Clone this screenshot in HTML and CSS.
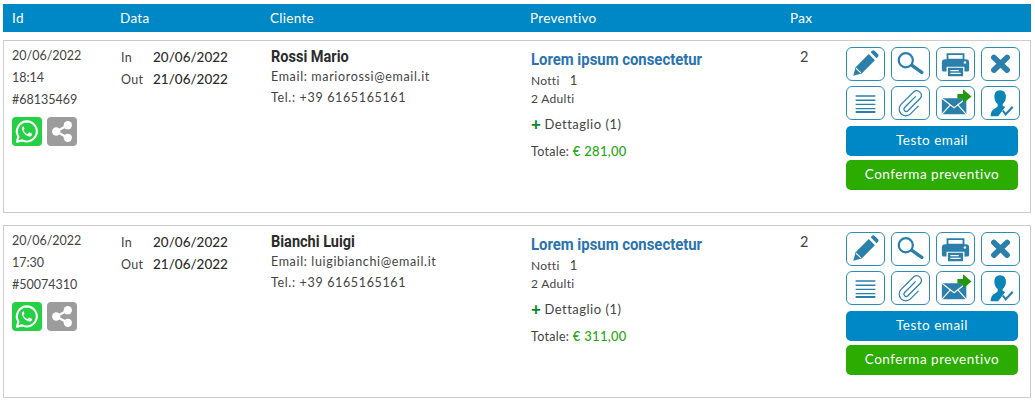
FILE: index.html
```html
<!DOCTYPE html>
<html lang="it">
<head>
    <meta charset="UTF-8">
    <title>Preventivi</title>
    <link rel="stylesheet" href="styles.css">
</head>
<body>
    <svg class="sprites" width="0" height="0">
        <symbol id="i-whatsapp" viewBox="0 0 30 30">
            <path d="M15 4.5a10.4 10.4 0 0 0-8.9 15.8L4.6 25.6l5.500-1.400A10.400 10.400 0 1 0 15 4.500z" fill="none" stroke="#fff" stroke-width="2.2" stroke-linejoin="round"/>
            <path d="M11.300 9.700c-.5 0-1.300.5-1.500 1.800-.3 1.700.7 3.700 2.300 5.500 1.700 1.800 3.700 3 5.500 3.100 1.400.1 2.300-.8 2.500-1.600.2-.7.1-1.100-.1-1.200l-2.500-1.200c-.3-.1-.5 0-.7.200l-.9 1.100c-.2.200-.4.200-.7.100-1.700-.7-3-2-3.800-3.600-.1-.2 0-.4.200-.6l.7-.9c.1-.2.100-.4 0-.6l-1-2.400c-.1-.2-.3-.2-.5-.2z" fill="#fff"/>
        </symbol>
        <symbol id="i-share" viewBox="0 0 30 30">
            <path d="M21 8.500 9 15l12 6.500" fill="none" stroke="#fff" stroke-width="2.4"/>
            <circle cx="21" cy="8.500" r="4.3" fill="#fff"/>
            <circle cx="9" cy="15" r="4.3" fill="#fff"/>
            <circle cx="21" cy="21.500" r="4.3" fill="#fff"/>
        </symbol>
        <symbol id="i-pencil" viewBox="0 0 39 34">
            <path d="M6.500 29.500l2.500-9L23 6.500l6.500 6.500-14 14z" fill="#2b7fab"/>
            <path d="M25 4.500l1.500-1.500c.8-.8 1.800-.8 2.600 0l3.700 3.700c.8.800.8 1.800 0 2.600L31.300 11z" fill="#2b7fab"/>
            <path d="M9.500 21.500l5 5" stroke="#fff" stroke-width="1.2"/>
        </symbol>
        <symbol id="i-search" viewBox="0 0 39 34">
            <circle cx="14.500" cy="13" r="7.500" fill="none" stroke="#2b7fab" stroke-width="2.4"/>
            <path d="M21 18.500l10.500 7.500" stroke="#2b7fab" stroke-width="3.6" stroke-linecap="round"/>
        </symbol>
        <symbol id="i-print" viewBox="0 0 39 34">
            <path d="M11 6.500h17v6H11z" fill="none" stroke="#2b7fab" stroke-width="2"/>
            <path d="M8.500 12h22a3.500 3.500 0 0 1 3.500 3.500V23a2 2 0 0 1-2 2h-3v-5H10v5H7a2 2 0 0 1-2-2v-7.500A3.500 3.500 0 0 1 8.500 12z" fill="#2b7fab"/>
            <path d="M11.500 21h16v9h-16z" fill="#2b7fab"/>
            <path d="M14 24h9M14 27h11" stroke="#fff" stroke-width="1.3"/>
            <circle cx="29.500" cy="15.500" r="1.300" fill="#fff"/>
        </symbol>
        <symbol id="i-close" viewBox="0 0 39 34">
            <path d="M12.500 10l14 13.500M26.500 10l-14 13.500" stroke="#2b7fab" stroke-width="6" stroke-linecap="round"/>
        </symbol>
        <symbol id="i-list" viewBox="0 0 39 34">
            <path d="M9 9.500h21M9 14h21M9 18.500h21M9 23h21" stroke="#2b7fab" stroke-width="1.5"/>
            <path d="M9 26.500h21" stroke="#2b7fab" stroke-width="2"/>
        </symbol>
        <symbol id="i-clip" viewBox="0 0 39 34">
            <path d="M25 10L13 22a2.500 2.500 0 0 0 3.500 3.500L30 12a5 5 0 0 0-7-7L9.500 18.500a7 7 0 0 0 10 10L28 20" fill="none" stroke="#2b7fab" stroke-width="1.3"/>
        </symbol>
        <symbol id="i-send" viewBox="0 0 39 34">
            <path d="M5 12h26v17H5z" fill="#2b7fab"/>
            <path d="M5 12l13 10 13-10M5 29l9.500-10.500M31 29l-9.500-10.500" fill="none" stroke="#fff" stroke-width="1.2"/>
            <path d="M21.500 7.500h6V2.500l9 7.500-9 7.500v-5h-6z" fill="#1f9a10"/>
        </symbol>
        <symbol id="i-user" viewBox="0 0 39 34">
            <path d="M19 3.500c4 0 6.300 3 6.300 6.800 0 3.300-1.500 6.400-3.500 7.700v2c1 .6 2 1 2.700 1.300L17 31H9c0-4.500 1.700-7 5-8.500 1-.5 2-1 2.500-2v-2.500c-2.100-1.400-3.500-4.400-3.500-7.700 0-3.800 2-6.800 6-6.800z" fill="#0b85b5"/>
            <path d="M22 25l3 4 7.500-8" fill="none" stroke="#2b7fab" stroke-width="2.2"/>
        </symbol>
    </svg>

    <div class="head-row">
        <div>Id</div>
        <div>Data</div>
        <div>Cliente</div>
        <div>Preventivo</div>
        <div>Pax</div>
    </div>

    <div class="card">
        <div class="col-id">
            <div>20/06/2022</div>
            <div>18:14</div>
            <div>#68135469</div>
            <div class="social">
                <span class="badge wa"><svg><use href="#i-whatsapp"/></svg></span>
                <span class="badge sh"><svg><use href="#i-share"/></svg></span>
            </div>
        </div>
        <div class="col-date">
            <span class="lbl">In</span><span class="day">20/06/2022</span>
            <span class="lbl">Out</span><span class="day">21/06/2022</span>
        </div>
        <div class="col-client">
            <div class="name">Rossi Mario</div>
            <div>Email: mariorossi@email.it</div>
            <div>Tel.: +39 6165165161</div>
        </div>
        <div class="col-quote">
            <div class="title">Lorem ipsum consectetur</div>
            <div class="small">Notti &nbsp; <span class="num">1</span></div>
            <div class="small">2 Adulti</div>
            <div class="detail"><b>+</b>Dettaglio (1)</div>
            <div class="total">Totale: <b>€ 281,00</b></div>
        </div>
        <div class="col-pax">2</div>
        <div class="col-actions">
            <div class="icons">
                <span class="ico"><svg><use href="#i-pencil"/></svg></span>
                <span class="ico"><svg><use href="#i-search"/></svg></span>
                <span class="ico"><svg><use href="#i-print"/></svg></span>
                <span class="ico"><svg><use href="#i-close"/></svg></span>
                <span class="ico"><svg><use href="#i-list"/></svg></span>
                <span class="ico"><svg><use href="#i-clip"/></svg></span>
                <span class="ico"><svg><use href="#i-send"/></svg></span>
                <span class="ico"><svg><use href="#i-user"/></svg></span>
            </div>
            <div class="btn blue">Testo email</div>
            <div class="btn green">Conferma preventivo</div>
        </div>
    </div>

    <div class="card">
        <div class="col-id">
            <div>20/06/2022</div>
            <div>17:30</div>
            <div>#50074310</div>
            <div class="social">
                <span class="badge wa"><svg><use href="#i-whatsapp"/></svg></span>
                <span class="badge sh"><svg><use href="#i-share"/></svg></span>
            </div>
        </div>
        <div class="col-date">
            <span class="lbl">In</span><span class="day">20/06/2022</span>
            <span class="lbl">Out</span><span class="day">21/06/2022</span>
        </div>
        <div class="col-client">
            <div class="name">Bianchi Luigi</div>
            <div>Email: luigibianchi@email.it</div>
            <div>Tel.: +39 6165165161</div>
        </div>
        <div class="col-quote">
            <div class="title">Lorem ipsum consectetur</div>
            <div class="small">Notti &nbsp; <span class="num">1</span></div>
            <div class="small">2 Adulti</div>
            <div class="detail"><b>+</b>Dettaglio (1)</div>
            <div class="total">Totale: <b>€ 311,00</b></div>
        </div>
        <div class="col-pax">2</div>
        <div class="col-actions">
            <div class="icons">
                <span class="ico"><svg><use href="#i-pencil"/></svg></span>
                <span class="ico"><svg><use href="#i-search"/></svg></span>
                <span class="ico"><svg><use href="#i-print"/></svg></span>
                <span class="ico"><svg><use href="#i-close"/></svg></span>
                <span class="ico"><svg><use href="#i-list"/></svg></span>
                <span class="ico"><svg><use href="#i-clip"/></svg></span>
                <span class="ico"><svg><use href="#i-send"/></svg></span>
                <span class="ico"><svg><use href="#i-user"/></svg></span>
            </div>
            <div class="btn blue">Testo email</div>
            <div class="btn green">Conferma preventivo</div>
        </div>
    </div>
</body>
</html>
```

FILE: styles.css
```css
body {
    font-family: "Lato", "Open Sans", sans-serif;
    margin: 0;
    padding: 4px 4px 0 3px;
    background-color: #fff;
    color: #444;
    font-size: 13px;
    letter-spacing: 0.3px;
}

.sprites {
    position: absolute;
}

.head-row {
    display: grid;
    grid-template-columns: 108px 150px 260px 260px 1fr;
    height: 28px;
    padding-left: 9px;
    align-items: center;
    background-color: #0088c6;
    color: #fff;
    font-size: 13.5px;
    margin-bottom: 8px;
}

.card {
    display: grid;
    grid-template-columns: 108px 150px 260px 269px 46px 1fr;
    box-sizing: border-box;
    height: 173px;
    padding: 4px 0 0 8px;
    border: 1px solid #ccc;
    margin-bottom: 12px;
}

.col-id {
    line-height: 22px;
    font-size: 12.5px;
    letter-spacing: 0;
}

.social {
    display: flex;
    gap: 5px;
    margin-top: 6px;
}

.badge {
    display: block;
    width: 30px;
    height: 29px;
    border-radius: 4px;
}

.badge svg {
    display: block;
    width: 30px;
    height: 29px;
}

.wa {
    background-color: #25d044;
}

.sh {
    background-color: #9c9c9c;
}

.col-date {
    display: grid;
    grid-template-columns: 32px 1fr;
    grid-auto-rows: 22px;
    align-items: center;
    align-content: start;
    padding-left: 1px;
    padding-top: 1px;
}

.lbl {
    font-size: 12.5px;
}

.day {
    font-size: 13.5px;
    font-weight: 500;
    letter-spacing: 0;
    color: #2c2c2c;
}

.col-client {
    padding-top: 2px;
    line-height: 21px;
    padding-left: 1px;
    font-size: 12.5px;
    letter-spacing: 0.65px;
}

.name {
    display: block;
    font-family: "Roboto", sans-serif;
    font-weight: bold;
    font-size: 16.5px;
    line-height: 19px;
    color: #2c2c2c;
    letter-spacing: 0;
    transform: scaleX(0.88);
    transform-origin: left;
}

.col-quote {
    padding-top: 4px;
    padding-left: 1px;
}

.title {
    font-family: "Roboto", sans-serif;
    font-weight: bold;
    font-size: 17px;
    line-height: 20px;
    color: #2a73b0;
    letter-spacing: 0;
    margin-bottom: 2px;
    white-space: nowrap;
    transform: scaleX(0.875);
    transform-origin: left;
}

.small {
    font-size: 12px;
    line-height: 18px;
}

.num {
    font-size: 13px;
}

.detail {
    display: flex;
    align-items: center;
    gap: 3px;
    font-size: 13px;
    line-height: 20px;
    margin-top: 6px;
    letter-spacing: 0.5px;
}

.detail b {
    color: #0c8a2c;
    font-size: 17px;
    font-weight: 900;
    line-height: 16px;
}

.total {
    font-size: 12.5px;
    line-height: 20px;
    margin-top: 7px;
}

.total b {
    color: #2aa515;
    font-weight: 500;
    font-size: 13px;
}

.col-pax {
    font-size: 14.5px;
    line-height: 18px;
    padding-left: 1px;
    padding-top: 3px;
}

.col-actions {
    width: 174px;
    padding-top: 2px;
    margin-left: 1px;
}

.icons {
    display: grid;
    grid-template-columns: repeat(4, 39px);
    grid-auto-rows: 34px;
    column-gap: 6px;
    row-gap: 5px;
    margin-bottom: 6px;
}

.ico {
    display: block;
    box-sizing: border-box;
    border: 1px solid #2b8fb5;
    border-radius: 6px;
    overflow: hidden;
}

.ico svg {
    display: block;
    width: 37px;
    height: 32px;
}

.btn {
    height: 30px;
    line-height: 29px;
    width: 172px;
    border-radius: 5px;
    text-align: center;
    color: #fff;
    font-size: 13.5px;
    letter-spacing: 0.5px;
    margin-bottom: 4px;
}

.blue {
    background-color: #0088c6;
}

.green {
    background-color: #2cab00;
}
```
